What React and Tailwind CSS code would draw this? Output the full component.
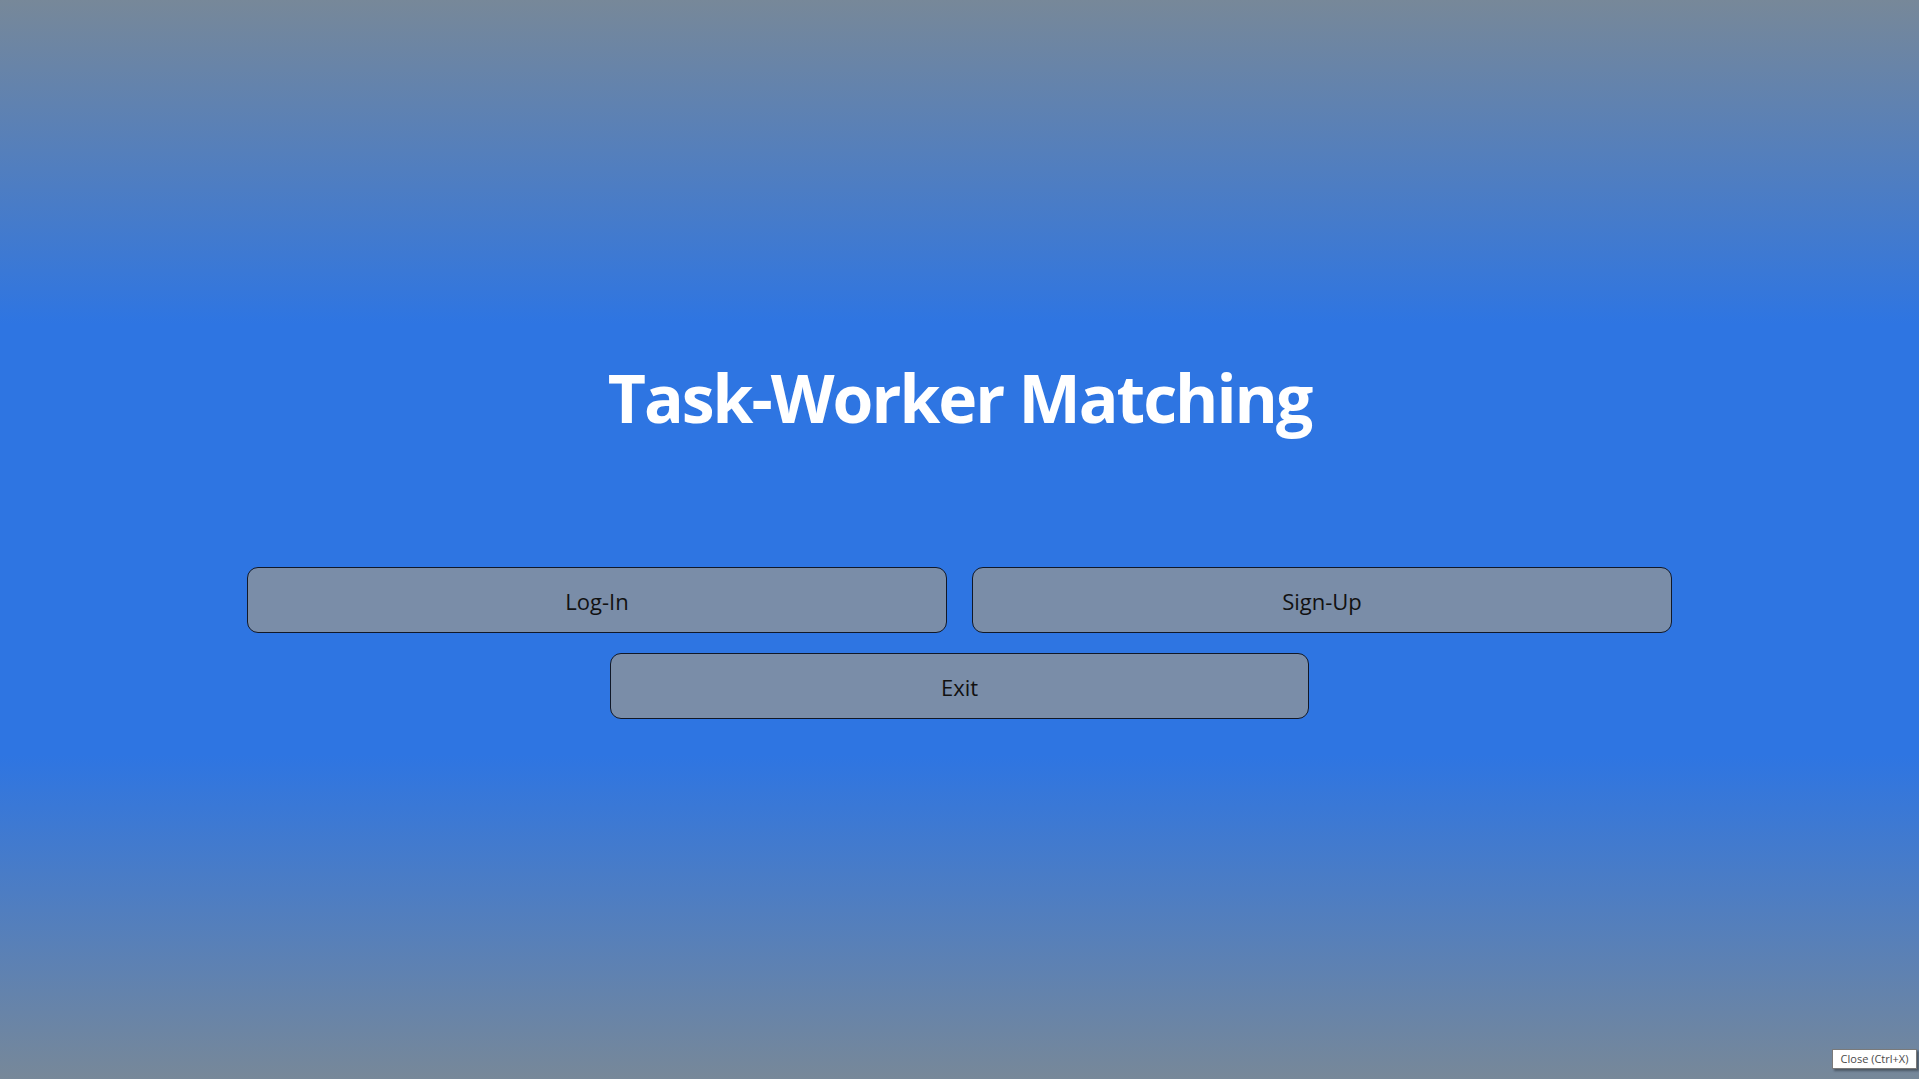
const App = () => {
	return (
		<div
			className="relative w-full h-[1079px] overflow-hidden bg-[linear-gradient(to_bottom,#778899_0%,#2e75e2_30%,#2e75e2_70%,#778899_100%)]"
			style={{ fontFamily: '"Open Sans", "Noto Sans", sans-serif' }}
		>
			<div className="flex flex-col items-center pt-[350px]">
				<h1 className="text-[66px] leading-[94px] font-bold text-white tracking-[-2px]">Task-Worker Matching</h1>

				<div className="mt-[123px] flex flex-col items-center gap-[20px]">
					<div className="flex gap-[25px]">
						<button className="w-[700px] h-[66px] pt-[2px] rounded-[11px] border border-[#111827] bg-[#7a8da8] text-[22px] text-[#111111]">
							Log-In
						</button>
						<button className="w-[700px] h-[66px] pt-[2px] rounded-[11px] border border-[#111827] bg-[#7a8da8] text-[22px] text-[#111111]">
							Sign-Up
						</button>
					</div>
					<button className="w-[699px] h-[66px] pt-[2px] rounded-[11px] border border-[#111827] bg-[#7a8da8] text-[22px] text-[#111111]">
						Exit
					</button>
				</div>
			</div>

			{/* tooltip over the close button */}
			<div className="absolute left-[1832px] top-[1049px] w-[85px] h-[20px] flex items-center justify-center bg-white border border-[#7a7a7a] shadow-[2px_2px_2px_rgba(0,0,0,0.35)] text-[11px] text-[#4a4a4a]">
				Close (Ctrl+X)
			</div>
		</div>
	);
};

export default App;
